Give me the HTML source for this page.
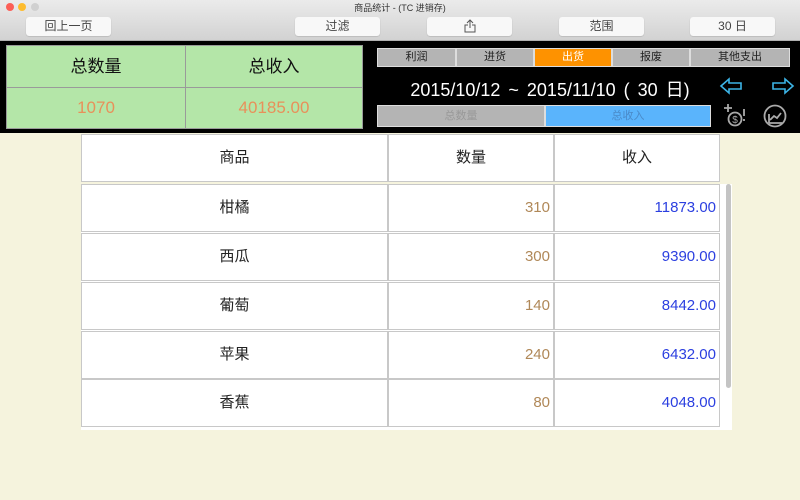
<!DOCTYPE html>
<html><head><meta charset="utf-8"><style>
*{margin:0;padding:0;box-sizing:border-box}
body{width:800px;height:500px;overflow:hidden;background:#f5f3dd;font-family:"Liberation Sans","Noto Sans CJK SC",sans-serif;position:relative}
.a{position:absolute}
.tb{left:0;top:0;width:800px;height:41px;background:linear-gradient(#ebebeb,#d2d2d2);border-bottom:1px solid #b0b0b0}
.btn{position:absolute;top:17px;height:19px;background:#f8f8f8;border-radius:3px;font-size:12px;color:#444;text-align:center;line-height:19px;box-shadow:0 0.5px 1px rgba(0,0,0,.2)}
.dot{position:absolute;top:3px;width:8px;height:8px;border-radius:50%}
.g{background:#b4e6a8;border:1px solid #9a9a9a;text-align:center;position:absolute}
.tab{position:absolute;top:48px;height:19px;background:#b4b4b4;border:1px solid #ddd;font-size:11px;text-align:center;line-height:17px;color:#222}
.c{position:absolute;background:#fff;border:1px solid #c8c8c8;font-size:15px;color:#222;line-height:46px;height:48px}
.n{text-align:right;padding-right:3px;color:#b08858}
.v{text-align:right;padding-right:3px;color:#2b3fe0}
</style></head><body>
<div class="a tb"></div>
<div class="dot" style="left:6px;background:#fc5f57"></div>
<div class="dot" style="left:18px;background:#fdbc2e"></div>
<div class="dot" style="left:31px;background:#d0d0d0"></div>
<div class="a" style="left:0;width:800px;top:1px;text-align:center;font-size:9px;color:#333">商品统计 - (TC 进销存)</div>
<div class="btn" style="left:26px;width:85px">回上一页</div>
<div class="btn" style="left:295px;width:85px">过滤</div>
<div class="btn" style="left:427px;width:85px"><svg width="12" height="14" viewBox="0 0 12 14" style="margin-top:2px"><path d="M6 1v8M3 4l3-3 3 3M4 6H1v7h10V6H8" fill="none" stroke="#555" stroke-width="1"/></svg></div>
<div class="btn" style="left:559px;width:85px">范围</div>
<div class="btn" style="left:690px;width:85px">30 日</div>
<div class="a" style="left:0;top:41px;width:800px;height:92px;background:#000"></div>
<div class="g" style="left:6px;top:45px;width:180px;height:43px;font-size:17px;line-height:42px;color:#111">总数量</div>
<div class="g" style="left:185px;top:45px;width:178px;height:43px;font-size:17px;line-height:42px;color:#111">总收入</div>
<div class="g" style="left:6px;top:87px;width:180px;height:42px;font-size:17px;line-height:40px;color:#e8905a">1070</div>
<div class="g" style="left:185px;top:87px;width:178px;height:42px;font-size:17px;line-height:40px;color:#e8905a">40185.00</div>
<div class="tab" style="left:377px;width:79px">利润</div>
<div class="tab" style="left:456px;width:78px">进货</div>
<div class="tab" style="left:534px;width:78px;background:#fe9200;color:#fff">出货</div>
<div class="tab" style="left:612px;width:78px">报废</div>
<div class="tab" style="left:690px;width:100px">其他支出</div>
<div class="a" style="left:380px;width:340px;top:76px;text-align:center;font-size:18px;color:#fff;word-spacing:3px">2015/10/12 ~ 2015/11/10 ( 30 日)</div>
<div class="a" style="left:377px;top:105px;width:168px;height:22px;background:#b4b4b4;border:1px solid #ddd;font-size:11px;color:#999;text-align:center;line-height:20px">总数量</div>
<div class="a" style="left:545px;top:105px;width:166px;height:22px;background:#5ab4fc;border:1px solid #ddd;font-size:11px;color:#4a8ac8;text-align:center;line-height:20px">总收入</div>
<svg class="a" style="left:718px;top:76px" width="80" height="56" viewBox="0 0 80 56">
<path d="M3 10l8-7v4h12v6H11v4z" fill="none" stroke="#3cb4e6" stroke-width="1.6"/>
<path d="M75 10l-8-7v4H55v6h12v4z" fill="none" stroke="#3cb4e6" stroke-width="1.6"/>
<g stroke="#aaa" fill="none" stroke-width="1.8"><path d="M10 28v8M6 32h8"/><circle cx="17" cy="43" r="6.5"/><path d="M26 33v7M26 43v2"/>
<circle cx="57" cy="40" r="10.5"/><path d="M51 47v-9M51 47h13M52 44l4-4 3 2 4-5"/></g>
<text x="17" y="47" font-size="10" fill="#aaa" text-anchor="middle">$</text>
</svg>
<div class="a" style="left:81px;top:184px;width:651px;height:246px;background:#fff"></div>
<div class="a" style="left:726px;top:184px;width:5px;height:204px;background:#c4c4c4;border-radius:3px"></div>
<div class="c" style="left:81px;top:134px;width:307px;text-align:center">商品</div>
<div class="c" style="left:388px;top:134px;width:166px;text-align:center">数量</div>
<div class="c" style="left:554px;top:134px;width:166px;text-align:center">收入</div>

<div class="c" style="left:81px;top:184px;width:307px;text-align:center">柑橘</div>
<div class="c n" style="left:388px;top:184px;width:166px">310</div>
<div class="c v" style="left:554px;top:184px;width:166px">11873.00</div>
<div class="c" style="left:81px;top:233px;width:307px;text-align:center">西瓜</div>
<div class="c n" style="left:388px;top:233px;width:166px">300</div>
<div class="c v" style="left:554px;top:233px;width:166px">9390.00</div>
<div class="c" style="left:81px;top:282px;width:307px;text-align:center">葡萄</div>
<div class="c n" style="left:388px;top:282px;width:166px">140</div>
<div class="c v" style="left:554px;top:282px;width:166px">8442.00</div>
<div class="c" style="left:81px;top:331px;width:307px;text-align:center">苹果</div>
<div class="c n" style="left:388px;top:331px;width:166px">240</div>
<div class="c v" style="left:554px;top:331px;width:166px">6432.00</div>
<div class="c" style="left:81px;top:379px;width:307px;text-align:center">香蕉</div>
<div class="c n" style="left:388px;top:379px;width:166px">80</div>
<div class="c v" style="left:554px;top:379px;width:166px">4048.00</div>
</body></html>
